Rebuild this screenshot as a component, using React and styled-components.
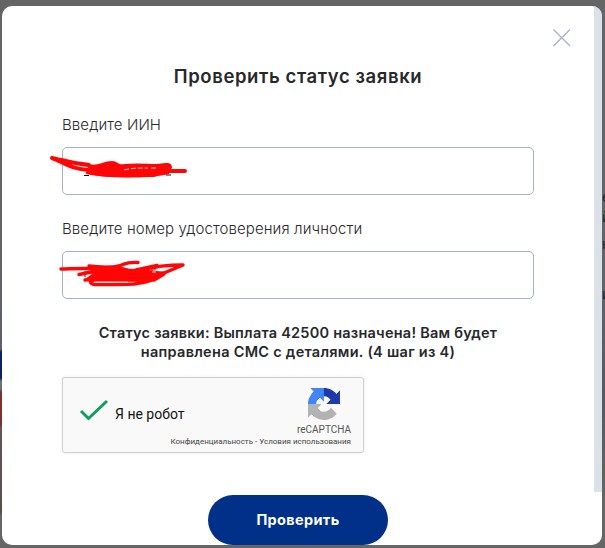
import React from "react";
import styled, { createGlobalStyle } from "styled-components";

const GlobalStyle = createGlobalStyle`
  * { box-sizing: border-box; }
  html, body { margin: 0; padding: 0; overflow: hidden; }
  body { font-family: Inter, "Open Sans", sans-serif; color: #27282b; }
`;

const Backdrop = styled.div`
  display: grid;
  grid-template-columns: 2px 600px 3px;
  width: 605px;
  height: 548px;
  padding: 6px 0 3px;
  background: #656565;
`;

const LeftEdge = styled.div`
  background: linear-gradient(
    #656565 0 190px, #62636b 260px, #5d5f6d 343px, #0c2068 346px 372px,
    #706e70 375px 383px, #7f302f 386px 419px, #625754 422px, #594f49 506px, #656667 510px
  );
`;

const RightEdge = styled.div`
  height: 539px;
  padding-top: 181px;
  overflow: hidden;
  font: 14px/19px "Open Sans", sans-serif;
  color: #202124;
  background: linear-gradient(#656565 0 170px, #60656a 270px, #555b61 390px, #656565 500px);
`;

const Peek = styled.div`
  height: ${(p) => p.$h}px;
  white-space: nowrap;
`;

const Dialog = styled.main`
  display: grid;
  grid-template-columns: 592px 8px;
  height: 539px;
  overflow: hidden;
  background: #fff;
  border-radius: 10px;
`;

const Track = styled.div`
  height: 486px;
  background: #dae1e9;
`;

const Content = styled.div`
  display: flex;
  flex-direction: column;
  padding: 22px 20px 0 60px;
`;

const CloseButton = styled.button`
  align-self: flex-end;
  width: 20px;
  height: 20px;
  margin-right: 2px;
  padding: 0;
  border: 0;
  background: none;
  svg { display: block; }
`;

const Form = styled.form`
  display: flex;
  flex-direction: column;
  width: 472px;
`;

const Title = styled.h1`
  margin: 16px 0 0;
  font-size: 18.5px;
  line-height: 24px;
  font-weight: 600;
  letter-spacing: 0.6px;
  text-align: center;
`;

const Field = styled.div`
  display: flex;
  flex-direction: column;
  height: 80px;
  margin-top: ${(p) => p.$gap}px;
`;

const Label = styled.label`
  height: 32px;
  font-size: 15px;
  line-height: 19px;
  font-weight: 300;
  letter-spacing: 0.1px;
  white-space: nowrap;
`;

const InputBox = styled.div`
  position: relative;
  height: 48px;
  border: 1px solid #a4b3c0;
  border-radius: 5px;
`;

const Scribble = styled.svg`
  position: absolute;
  left: -23px;
  top: ${(p) => p.$top}px;
  overflow: visible;
`;

const Status = styled.p`
  margin: 24px 0 0;
  font-size: 14.5px;
  line-height: 19px;
  font-weight: 600;
  text-align: center;
  white-space: nowrap;
`;

const StatusLine = styled.span`
  display: block;
  letter-spacing: ${(p) => p.$spacing}px;
`;

const Captcha = styled.div`
  display: grid;
  grid-template-columns: 52px 1fr 78px;
  grid-template-rows: 59px 14px;
  width: 302px;
  height: 76px;
  margin-top: 16px;
  background: #f9f9f9;
  border: 1px solid #d0d0d0;
  border-radius: 3px;
  box-shadow: 0 0 3px #e4e4e4;
  font-family: Roboto, sans-serif;
`;

const CheckMark = styled.svg`
  margin: 21px 0 0 16px;
`;

const CaptchaLabel = styled.span`
  padding-top: 26px;
  font-size: 14px;
  line-height: 20px;
  color: #111;
`;

const Brand = styled.div`
  display: flex;
  flex-direction: column;
  align-items: center;
  padding-top: 10px;
  font-size: 10px;
  line-height: 12px;
  color: #555;
  svg { display: block; margin-bottom: 4px; }
`;

const Legal = styled.div`
  grid-column: 1 / -1;
  padding-right: 12px;
  text-align: right;
  font-size: 8px;
  line-height: 10px;
  white-space: nowrap;
  color: #444;
`;

const Submit = styled.button`
  align-self: center;
  width: 180px;
  height: 50px;
  margin-top: 42px;
  padding: 0;
  border: 0;
  border-radius: 25px;
  background: #003087;
  color: #fff;
  font: 700 14.5px/20px Inter, sans-serif;
  letter-spacing: 0.35px;
`;

export default function App() {
  return (
    <>
      <GlobalStyle />
      <Backdrop>
        <LeftEdge />
        <Dialog>
          <Content>
            <CloseButton type="button" aria-label="Закрыть">
              <svg width="20" height="20" viewBox="0 0 20 20">
                <path d="M1.5 1.5 18 18M18 1.5 1.5 18" stroke="#a7afc2" strokeWidth="1.3" />
              </svg>
            </CloseButton>
            <Form>
              <Title>Проверить статус заявки</Title>
              <Field $gap={27}>
                <Label>Введите ИИН</Label>
                <InputBox>
                  <Scribble $top={-8} width="160" height="60" viewBox="0 0 160 60" fill="none">
                    <path d="M44 35.500h5M69 25.500h15M126 35h5" stroke="#111" />
                    <path d="M49 26c20-2 50 0 82 1l-2 7c-15 4-62 5-83 0z" fill="#ff0505" />
                    <path d="M12 18C25 21 39 24 49 25M12 18c14 5 16 10 36 12M49 26c10 3 13-3 23-3 6 0 5 5 13 3 12-1 22 0 31 0 8 0 13-3 14 1l-3 4h18M47 31c19 6 40 4 67 4 7-3 11-5 16-5" stroke="#ff0505" strokeWidth="4" strokeLinecap="round" strokeLinejoin="round" />
                    <path d="M84 30c8-2 14-2 24-2M111 28h7" stroke="#fff" strokeDasharray="5 2" strokeWidth=".8" />
                  </Scribble>
                </InputBox>
              </Field>
              <Field $gap={24}>
                <Label>Введите номер удостоверения личности</Label>
                <InputBox>
                  <Scribble $top={-2} width="160" height="60" viewBox="0 0 160 60" fill="none">
                    <path d="M45 21v6M111 19h5M112 20v4" stroke="#111" />
                    <path d="M49 16 80 18 109 20 125 22 115 29 51 30 45 29 52 24Z" fill="#ff0505" />
                    <path d="M21 19C41 18 66 19 79 16c8-3 11-4 19-3.500M39 24.500c13-3 26-4 39-8.500M49 16c20 2 27 0 38 4M96 20l21-4.500M101 20c12-3 25-5 42-5l-19 8c-21 3-51 4-79 7M124 24l-10 6c-21 0-42 0-59 0-6 0-6 4 0 4.500 14 0 26 0 39-.5 9-1 16-3 21-5" stroke="#ff0505" strokeWidth="3.4" strokeLinecap="round" strokeLinejoin="round" />
                    <path d="M112 22h4M118 18.500l9-.5M54 32.200h34" stroke="#ffe9e9" strokeWidth=".9" />
                  </Scribble>
                </InputBox>
              </Field>
              <Status>
                <StatusLine $spacing={0.23}>Статус заявки: Выплата 42500 назначена! Вам будет</StatusLine>
                <StatusLine $spacing={0.28}>направлена СМС с деталями. (4 шаг из 4)</StatusLine>
              </Status>
              <Captcha>
                <CheckMark width="30" height="24" viewBox="0 0 30 24" fill="none">
                  <path d="m2 12 7.500 7.500L28 2" stroke="#0f9d62" strokeWidth="3" />
                </CheckMark>
                <CaptchaLabel>Я не робот</CaptchaLabel>
                <Brand>
                  <svg width="32" height="32" viewBox="0 0 64 64">
                    <path d="M64 31.955l-.033-1.370V4.687l-7.160 7.160C50.948 4.674 42.033.093 32.050.093c-10.400 0-19.622 4.960-25.458 12.640l11.736 11.860a15.550 15.550 0 0 1 4.754-5.334c2.050-1.600 4.952-2.906 8.968-2.906.485 0 .860.057 1.135.163 4.976.393 9.288 3.140 11.828 7.124l-8.307 8.307L64 31.953" fill="#1c3aa9" />
                    <path d="M31.862.094l-1.370.033H4.594l7.160 7.160C4.580 13.147 0 22.060 0 32.046c0 10.400 4.960 19.622 12.640 25.458L24.500 45.768a15.550 15.550 0 0 1-5.334-4.754c-1.600-2.050-2.906-4.952-2.906-8.968 0-.485.057-.860.163-1.135.393-4.976 3.140-9.288 7.124-11.828l8.307 8.307L31.860.095" fill="#4285f4" />
                    <path d="M.001 32.045l.033 1.370v25.898l7.160-7.160c5.860 7.173 14.774 11.754 24.760 11.754 10.400 0 19.622-4.960 25.458-12.640l-11.736-11.860a15.550 15.550 0 0 1-4.754 5.334c-2.050 1.600-4.952 2.906-8.968 2.906-.485 0-.860-.057-1.135-.163-4.976-.393-9.288-3.140-11.828-7.124l8.307-8.307-31.960.001" fill="#b3b3b3" />
                  </svg>
                  reCAPTCHA
                </Brand>
                <Legal>Конфиденциальность - Условия использования</Legal>
              </Captcha>
              <Submit type="button">Проверить</Submit>
            </Form>
          </Content>
          <Track />
        </Dialog>
        <RightEdge>
          <Peek $h={20}>е</Peek>
          <Peek $h={27}>й</Peek>
          <Peek $h={50}>н</Peek>
          <Peek $h={20}>и</Peek>
        </RightEdge>
      </Backdrop>
    </>
  );
}
